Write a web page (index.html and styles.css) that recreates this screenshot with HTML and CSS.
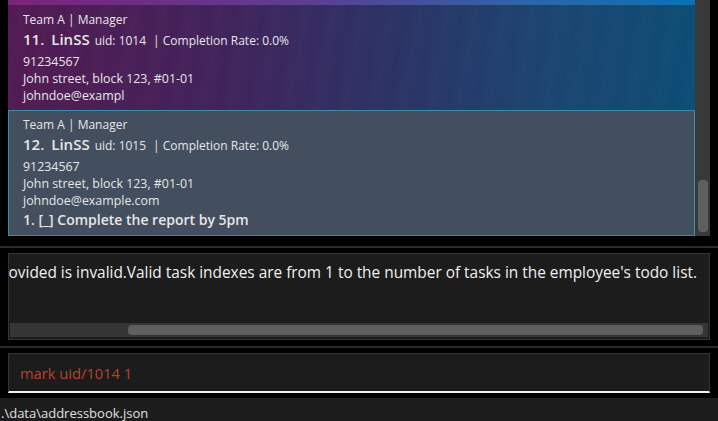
FILE: index.html
```html
<!DOCTYPE html>
<html>
<head>
<meta charset="utf-8">
<link rel="stylesheet" href="styles.css">
</head>
<body>
<div class="app">
  <div class="list-panel">
    <div class="list">
      <div class="strip"></div>
      <div class="card card-grad">
        <div class="team">Team A | Manager</div>
        <div class="title"><span class="idx">11.</span><span class="name">LinSS</span><span class="uid">uid: 1014</span><span class="rate">| Completion Rate: 0.0%</span></div>
        <div class="line phone">91234567</div>
        <div class="line">John street, block 123, #01-01</div>
        <div class="line">johndoe@exampl</div>
      </div>
      <div class="card card-sel">
        <div class="team">Team A | Manager</div>
        <div class="title"><span class="idx">12.</span><span class="name">LinSS</span><span class="uid">uid: 1015</span><span class="rate">| Completion Rate: 0.0%</span></div>
        <div class="line phone">91234567</div>
        <div class="line">John street, block 123, #01-01</div>
        <div class="line">johndoe@example.com</div>
        <div class="task">1. [_] Complete the report by 5pm</div>
      </div>
    </div>
    <div class="vscroll"><div class="vthumb"></div></div>
  </div>
  <div class="sep"></div>
  <div class="result">
    <div class="result-text"><span>The task index provided is invalid.Valid task indexes are from 1 to the number of tasks in the employee's todo list.</span></div>
    <div class="hscroll"><div class="hthumb"></div></div>
  </div>
  <div class="sep sep2"></div>
  <div class="command">mark uid/1014 1</div>
  <div class="status">.\data\addressbook.json</div>
</div>
</body>
</html>
```
FILE: styles.css
```css
html, body {
  margin: 0;
  padding: 0;
  background: #000;
}
body {
  width: 718px;
  height: 421px;
  overflow: hidden;
  font-family: "Open Sans", "Noto Sans", sans-serif;
  color: #e6e6e6;
}
.app {
  display: flex;
  flex-direction: column;
  height: 421px;
}
.app > * {
  flex-shrink: 0;
}
.list-panel {
  display: flex;
  height: 236px;
  padding-left: 8px;
}
.list {
  width: 687px;
  display: flex;
  flex-direction: column;
  overflow: hidden;
}
.strip {
  height: 5px;
  background: linear-gradient(90deg, #7b2479 0%, #5a3f95 45%, #2f64a8 75%, #0b72b4 100%);
  flex: none;
}
.card {
  box-sizing: border-box;
  padding: 7px 15px 0 15px;
  flex: none;
  overflow: hidden;
  white-space: nowrap;
}
.card-grad {
  height: 105px;
  background:
    repeating-linear-gradient(100deg, rgba(255,255,255,0) 0px, rgba(255,255,255,0.015) 14px, rgba(255,255,255,0) 28px),
    linear-gradient(90deg, #521a52 0%, #42225a 30%, #2c3264 55%, #1c4470 78%, #0c4d75 100%);
}
.card-sel {
  height: 126px;
  background: #434f5f;
  border: 1px solid #3a8ea6;
  padding: 6px 14px 0 14px;
}
.team {
  font-size: 12px;
  line-height: 16px;
}
.title {
  display: flex;
  align-items: baseline;
  margin-top: 1px;
  line-height: 20px;
}
.idx {
  font-size: 15px;
  font-weight: 600;
  margin-right: 7px;
}
.name {
  font-size: 15px;
  font-weight: 600;
  margin-right: 5px;
}
.uid {
  font-size: 12px;
  margin-right: 7px;
}
.rate {
  font-size: 12px;
}
.line {
  font-size: 12.4px;
  line-height: 17px;
}
.phone {
  margin-top: 2px;
}
.task {
  font-size: 14px;
  font-weight: 600;
  line-height: 20px;
  margin-top: 1px;
}
.vscroll {
  width: 15px;
  background: #393939;
  display: flex;
  flex-direction: column;
  justify-content: flex-end;
  padding: 0 2px 4px 3px;
  box-sizing: border-box;
}
.vthumb {
  height: 52px;
  background: #5f5f5f;
  border-radius: 4px;
}
.sep {
  height: 2px;
  background: #2a2a2a;
  margin-top: 10px;
}
.result {
  margin: 5px 8px 0 8px;
  height: 87px;
  box-sizing: border-box;
  border: 1px solid #353535;
  background: #1c1c1c;
  display: flex;
  flex-direction: column;
}
.result-text {
  flex: 1;
  display: flex;
  justify-content: flex-end;
  overflow: hidden;
  white-space: nowrap;
  font-size: 15.4px;
  line-height: 20px;
  padding: 9px 12px 0 0;
  color: #f0f0f0;
}
.result-text span {
  flex: none;
}
.hscroll {
  height: 14px;
  flex: none;
  background: #353535;
  margin: 0 1px 2px 1px;
  display: flex;
  justify-content: flex-end;
  align-items: center;
  padding-right: 5px;
}
.hthumb {
  width: 575px;
  height: 10px;
  background: #5f5f5f;
  border-radius: 4px;
}
.sep2 {
  margin-top: 6px;
}
.command {
  margin: 5px 8px 0 8px;
  height: 40px;
  box-sizing: border-box;
  border: 1px solid #353535;
  border-bottom: 2px solid #f2f2f2;
  background: #1c1c1c;
  color: #b8442f;
  font-size: 14.7px;
  line-height: 38px;
  padding-left: 11px;
}
.status {
  margin-top: 5px;
  height: 23px;
  box-sizing: border-box;
  overflow: hidden;
  background: #1c1c1c;
  font-size: 13px;
  line-height: 16px;
  padding: 7px 0 0 1px;
  color: #e0e0e0;
}
```
